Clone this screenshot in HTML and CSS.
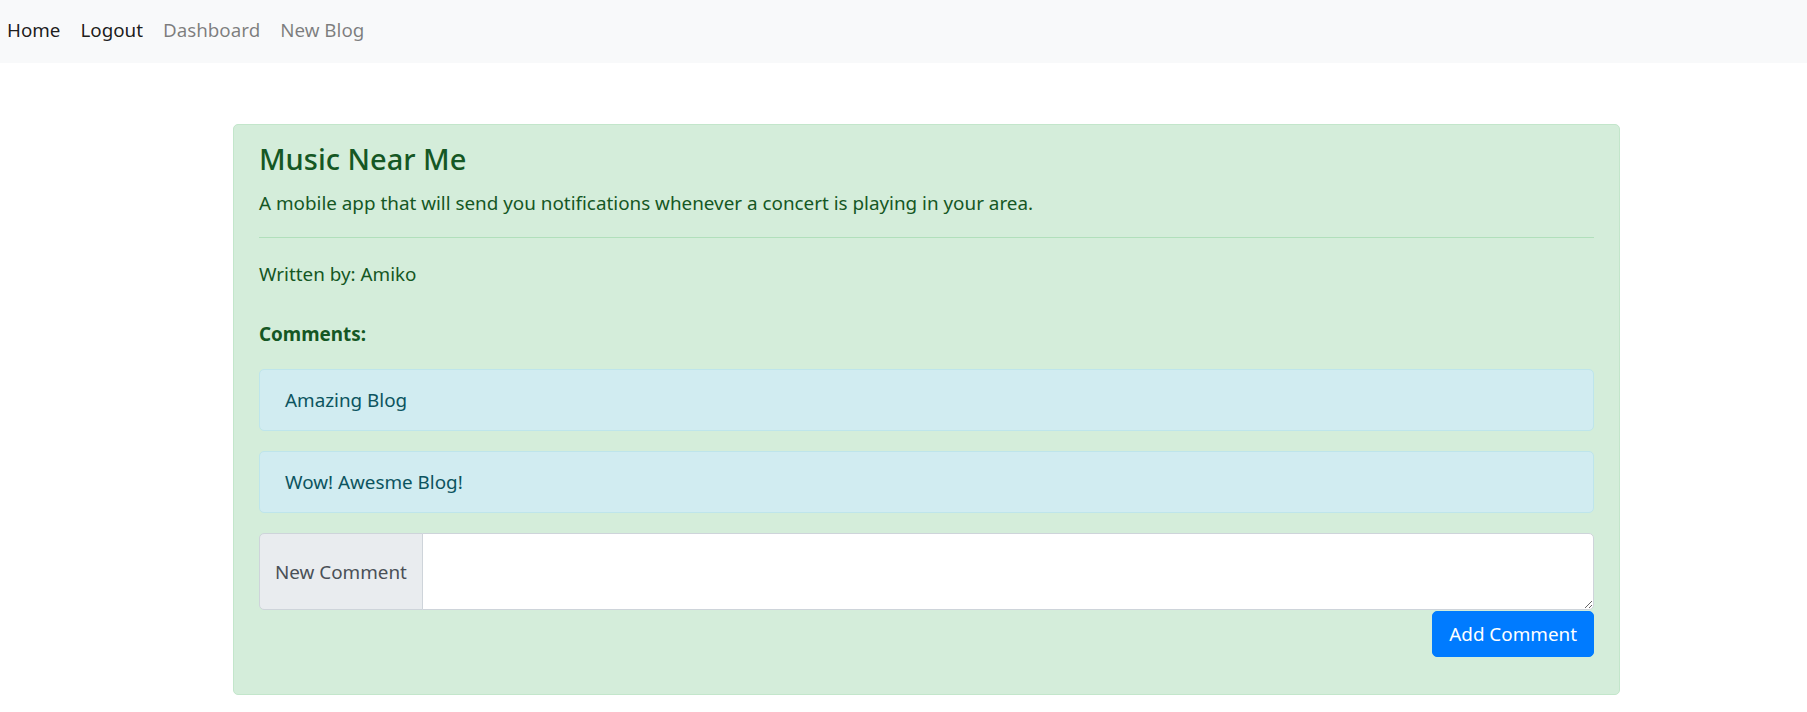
FILE: index.html
```html
<!DOCTYPE html>
<html lang="en">
<head>
<meta charset="utf-8">
<title>Music Near Me</title>
<link rel="stylesheet" href="styles.css">
</head>
<body>
<nav class="navbar">
  <a class="nav-link nav-link-dark" href="#">Home</a>
  <a class="nav-link nav-link-dark" href="#">Logout</a>
  <a class="nav-link" href="#">Dashboard</a>
  <a class="nav-link" href="#">New Blog</a>
</nav>
<main class="page">
  <section class="post">
    <h4 class="post-title">Music Near Me</h4>
    <p class="post-desc">A mobile app that will send you notifications whenever a concert is playing in your area.</p>
    <hr class="post-rule">
    <p class="post-author">Written by: Amiko</p>
    <p class="comments-label">Comments:</p>
    <div class="comment">Amazing Blog</div>
    <div class="comment">Wow! Awesme Blog!</div>
    <form class="comment-form">
      <div class="input-group">
        <span class="input-label">New Comment</span>
        <textarea class="input-field" rows="2"></textarea>
      </div>
      <div class="form-actions">
        <button type="button" class="btn-primary">Add Comment</button>
      </div>
    </form>
  </section>
</main>
</body>
</html>
```

FILE: styles.css
```css
* {
  box-sizing: border-box;
}

html, body {
  margin: 0;
  padding: 0;
  background: #fff;
}

body {
  font-family: "Noto Sans", "Open Sans", sans-serif;
  font-size: 18.85px;
  line-height: 30px;
  color: #212529;
}

.navbar {
  display: flex;
  align-items: flex-start;
  gap: 20px;
  height: 63px;
  padding: 15px 0 0 7px;
  background: #f8f9fa;
}

.nav-link {
  font-size: 18.8px;
  line-height: 30px;
  text-decoration: none;
  color: rgba(0, 0, 0, 0.5);
}

.nav-link-dark {
  color: rgba(0, 0, 0, 0.9);
}

.page {
  padding: 61px 0 0 233px;
}

.post {
  width: 1387px;
  background: #d4edda;
  border: 1px solid #c3e6cb;
  border-radius: 5px;
  color: #155724;
  padding: 16px 25px 15px 25px;
}

.post-title {
  margin: 0 0 11px;
  font-size: 29px;
  line-height: 36px;
  font-weight: 500;
  color: #155724;
}

.post-desc {
  margin: 0 0 19px;
}

.post-rule {
  margin: 19px 0 21px;
  border: 0;
  height: 0;
  border-top: 1px solid #b1dfbb;
}

.post-author {
  margin: 0 0 30px;
}

.comments-label {
  margin: 0 0 20px;
  font-weight: 700;
}

.comment {
  background: #d1ecf1;
  border: 1px solid #bee5eb;
  border-radius: 5px;
  color: #0c5460;
  padding: 15px 25px;
  margin-bottom: 20px;
}

.comment-form {
  margin: 0;
}

.input-group {
  display: flex;
  align-items: stretch;
}

.input-label {
  display: flex;
  align-items: center;
  padding: 7px 15px;
  background: #e9ecef;
  border: 1px solid #ced4da;
  border-radius: 5px 0 0 5px;
  color: #495057;
  white-space: nowrap;
}

.input-field {
  flex: 1;
  height: 77px;
  margin: 0 0 0 -1px;
  padding: 7px 15px;
  border: 1px solid #ced4da;
  border-radius: 0 5px 5px 0;
  background: #fff;
  font: inherit;
  color: #495057;
  resize: vertical;
}

.form-actions {
  display: flex;
  justify-content: flex-end;
  margin-bottom: 22px;
}

.btn-primary {
  font-family: inherit;
  font-size: 18.85px;
  line-height: 30px;
  padding: 7px 16px;
  margin-top: 1px;
  background: #007bff;
  border: 1px solid #007bff;
  border-radius: 5px;
  color: #fff;
  cursor: pointer;
}
```
